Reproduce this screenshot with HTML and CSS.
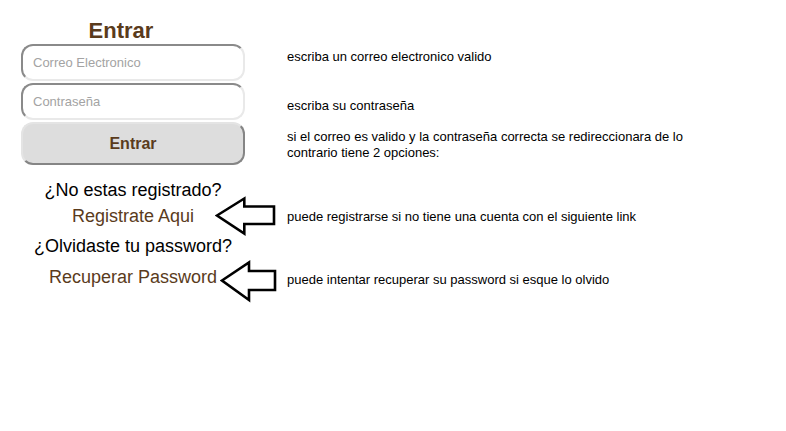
FILE: index.html
```html
<!DOCTYPE html>
<html lang="es">
<head>
<meta charset="utf-8">
<title>Entrar</title>
<link rel="stylesheet" href="styles.css">
</head>
<body>
<div class="page">
  <div class="row row-title">
    <div class="left"><h1 class="title">Entrar</h1></div>
  </div>
  <div class="row row-input1">
    <div class="left"><input class="field" type="text" placeholder="Correo Electronico"></div>
    <p class="note note-1">escriba un correo electronico valido</p>
  </div>
  <div class="row row-input2">
    <div class="left"><input class="field" type="password" placeholder="Contraseña"></div>
    <p class="note note-2">escriba su contraseña</p>
  </div>
  <div class="row row-button">
    <div class="left"><button class="btn" type="button">Entrar</button></div>
    <p class="note note-3">si el correo es valido y la contraseña correcta se redireccionara de lo<br>contrario tiene 2 opciones:</p>
  </div>
  <div class="row row-q1">
    <div class="left question">¿No estas registrado?</div>
  </div>
  <div class="row row-link1">
    <div class="left"><a class="link" href="#">Registrate Aqui</a></div>
    <svg class="arrow arrow-1" width="62" height="42" viewBox="0 0 62 42"><polygon points="2,19.5 29.3,2.5 29.3,10.5 59,10.5 59,28 29.3,28 29.3,37.5" /></svg>
    <p class="note note-4">puede registrarse si no tiene una cuenta con el siguiente link</p>
  </div>
  <div class="row row-q2">
    <div class="left question">¿Olvidaste tu password?</div>
  </div>
  <div class="row row-link2">
    <div class="left"><a class="link" href="#">Recuperar Password</a></div>
    <svg class="arrow arrow-2" width="60" height="44" viewBox="0 0 60 44"><polygon points="2,20.5 29,2.5 29,11 55,11 55,30 29,30 29,40" /></svg>
    <p class="note note-5">puede intentar recuperar su password si esque lo olvido</p>
  </div>
</div>
</body>
</html>
```
FILE: styles.css
```css
html, body {
  margin: 0;
  padding: 0;
  background: #ffffff;
}
body {
  font-family: "Liberation Sans", Arial, sans-serif;
  color: #000;
}
.page {
  padding: 18px 0 60px 21px;
}
.row {
  display: flex;
  position: relative;
}
.left {
  width: 224px;
  flex: none;
  text-align: center;
}
.title {
  margin: 0;
  padding-right: 24px;
  font-size: 22px;
  line-height: 25px;
  font-weight: bold;
  color: #5a3b1c;
}
.row-title { height: 25px; }
.row-input1 { margin-top: 1px; }
.row-input2 { margin-top: 2px; }
.row-button { margin-top: 2px; }
.row-q1 { margin-top: 15px; }
.row-link1 { margin-top: 6px; }
.row-q2 { margin-top: 10px; }
.row-link2 { margin-top: 11px; }

.field {
  display: block;
  box-sizing: border-box;
  width: 224px;
  height: 37px;
  margin: 0;
  padding: 0 10px;
  border: 2px solid;
  border-color: #8a8a8a #e9e9e9 #e9e9e9 #8a8a8a;
  border-radius: 12px;
  background: #fff;
  font-family: "Liberation Sans", Arial, sans-serif;
  font-size: 13px;
  color: #333;
  outline: none;
}
.field::placeholder {
  color: #a3a3a3;
  opacity: 1;
}
.btn {
  display: block;
  box-sizing: border-box;
  width: 224px;
  height: 43px;
  margin: 0;
  padding: 1px 0 0 0;
  border: 2px solid;
  border-color: #e4e4e4 #858585 #858585 #e4e4e4;
  border-radius: 12px;
  background: #dddddd;
  font-family: "Liberation Sans", Arial, sans-serif;
  font-size: 16px;
  font-weight: bold;
  color: #5a3b1c;
}
.note {
  margin: 0 0 0 42px;
  font-size: 13px;
  line-height: 16px;
  color: #000;
}
.note-1 { padding-top: 5px; }
.note-2 { padding-top: 15px; }
.note-3 { padding-top: 7px; }
.note-4 { padding-top: 3px; }
.note-5 { padding-top: 5px; }

.question {
  font-size: 18px;
  line-height: 20px;
  color: #000;
}
.link {
  display: block;
  font-size: 18px;
  line-height: 20px;
  color: #5a3b1c;
  text-decoration: none;
}
.arrow {
  position: absolute;
}
.arrow polygon {
  fill: #fff;
  stroke: #000;
  stroke-width: 2.6;
  stroke-linejoin: miter;
}
.arrow-1 { left: 194px; top: -10px; }
.arrow-2 { left: 199px; top: -7px; }
```
